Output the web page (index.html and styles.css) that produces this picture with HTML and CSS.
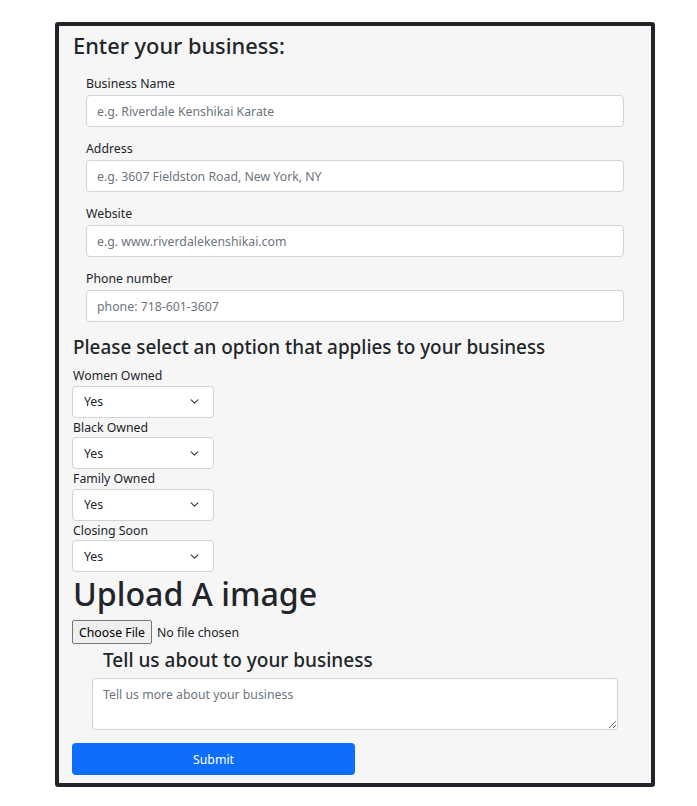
FILE: index.html
```html
<!DOCTYPE html>
<html lang="en">
<head>
<meta charset="utf-8">
<title>Enter your business</title>
<link rel="stylesheet" href="styles.css">
</head>
<body>
<form class="card">
  <h2 class="title">Enter your business:</h2>
  <div class="group">
    <label class="label" for="bn">Business Name</label>
    <input class="input" id="bn" type="text" placeholder="e.g. Riverdale Kenshikai Karate">
  </div>
  <div class="group">
    <label class="label" for="ad">Address</label>
    <input class="input" id="ad" type="text" placeholder="e.g. 3607 Fieldston Road, New York, NY">
  </div>
  <div class="group">
    <label class="label" for="ws">Website</label>
    <input class="input" id="ws" type="text" placeholder="e.g. www.riverdalekenshikai.com">
  </div>
  <div class="group">
    <label class="label" for="ph">Phone number</label>
    <input class="input" id="ph" type="text" placeholder="phone: 718-601-3607">
  </div>
  <h3 class="subtitle">Please select an option that applies to your business</h3>
  <div class="opts">
    <label class="slabel" for="wo">Women Owned</label>
    <select class="select" id="wo"><option>Yes</option><option>No</option></select>
    <label class="slabel" for="bo">Black Owned</label>
    <select class="select" id="bo"><option>Yes</option><option>No</option></select>
    <label class="slabel" for="fo">Family Owned</label>
    <select class="select" id="fo"><option>Yes</option><option>No</option></select>
    <label class="slabel" for="cs">Closing Soon</label>
    <select class="select" id="cs"><option>Yes</option><option>No</option></select>
  </div>
  <h1 class="upload">Upload A image</h1>
  <input class="file" type="file">
  <h3 class="tell">Tell us about to your business</h3>
  <textarea class="area" placeholder="Tell us more about your business"></textarea>
  <button class="submit" type="button">Submit</button>
</form>
</body>
</html>
```
FILE: styles.css
```css
* { box-sizing: border-box; }
body {
  margin: 0;
  background: #fff;
  font-family: "Noto Sans", "Open Sans", sans-serif;
  color: #212529;
}
.card {
  width: 600px;
  margin: 22px 0 0 55px;
  border: 4px solid #212529;
  border-radius: 3px;
  background: #f6f6f6;
  padding: 7px 13px 8px 13px;
  display: flex;
  flex-direction: column;
  align-items: flex-start;
}
.title {
  margin: 0 0 15px 1px;
  font-size: 21.8px;
  font-weight: 500;
  line-height: 1.2;
}
.group {
  align-self: stretch;
  margin: 0 14px 12px 14px;
  display: flex;
  flex-direction: column;
}
.label {
  font-size: 12.3px;
  line-height: 20px;
  margin-bottom: 1px;
}
.input {
  height: 32px;
  border: 1px solid #ced4da;
  border-radius: 4px;
  background: #fff;
  padding: 0 10px;
  font-family: inherit;
  font-size: 12.3px;
  color: #212529;
}
.input::placeholder, .area::placeholder { color: #6c757d; }
.subtitle {
  margin: 1px 0 7px 1px;
  font-size: 18.9px;
  font-weight: 500;
  line-height: 24px;
}
.opts {
  display: flex;
  flex-direction: column;
  align-items: flex-start;
}
.slabel {
  font-size: 12.3px;
  line-height: 19.5px;
  margin-left: 1px;
}
.select {
  appearance: none;
  -webkit-appearance: none;
  width: 142px;
  height: 32px;
  border: 1px solid #ced4da;
  border-radius: 4px;
  padding: 0 30px 0 11px;
  font-family: inherit;
  font-size: 12.3px;
  color: #212529;
  background: #fff url("data:image/svg+xml,%3csvg xmlns='http://www.w3.org/2000/svg' viewBox='0 0 16 16'%3e%3cpath fill='none' stroke='%23343a40' stroke-linecap='round' stroke-linejoin='round' stroke-width='2' d='m2 5 6 6 6-6'/%3e%3c/svg%3e") no-repeat right 13px center / 11px 9px;
}
.upload {
  margin: 0 0 5px 1px;
  font-size: 32.2px;
  font-weight: 500;
  line-height: 43px;
}
.file {
  font-family: "Noto Sans", sans-serif;
  font-size: 12.3px;
  color: #212529;
  height: 24px;
}
.file::file-selector-button {
  font-family: "Noto Sans", sans-serif;
  font-size: 12.3px;
  height: 24px;
  padding: 0 6px;
  margin-right: 5px;
  background: #efefef;
  border: 1px solid #767676;
  border-radius: 2px;
  color: #000;
}
.tell {
  margin: 4px 0 6px 31px;
  font-size: 19px;
  font-weight: 500;
  line-height: 24px;
}
.area {
  align-self: stretch;
  margin: 0 20px 13px 20px;
  height: 52px;
  border: 1px solid #ced4da;
  border-radius: 4px;
  background: #fff;
  padding: 7px 10px;
  font-family: inherit;
  font-size: 12.3px;
  color: #212529;
  resize: vertical;
}
.submit {
  width: 283px;
  height: 32px;
  border: none;
  border-radius: 4px;
  background: #0d6efd;
  color: #fff;
  font-family: inherit;
  font-size: 12.3px;
  padding: 0;
}
```
